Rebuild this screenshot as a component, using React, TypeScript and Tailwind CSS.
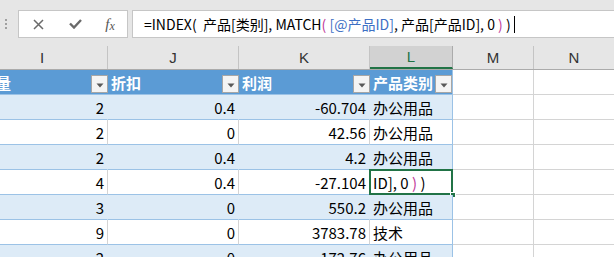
const FONT = { fontFamily: '"Noto Sans CJK SC", "Liberation Sans", sans-serif' };

type Row = { qty: string; disc: string; profit: string; cat: string; active?: boolean };

const rows: Row[] = [
  { qty: "2", disc: "0.4", profit: "-60.704", cat: "办公用品" },
  { qty: "2", disc: "0", profit: "42.56", cat: "办公用品" },
  { qty: "2", disc: "0.4", profit: "4.2", cat: "办公用品" },
  { qty: "4", disc: "0.4", profit: "-27.104", cat: "", active: true },
  { qty: "3", disc: "0", profit: "550.2", cat: "办公用品" },
  { qty: "9", disc: "0", profit: "3783.78", cat: "技术" },
  { qty: "2", disc: "0", profit: "172.76", cat: "办公用品" },
];

const GRID = "grid grid-cols-[131px_131px_131px_83px_81px_81px] -ml-[23px]";

function FilterButton() {
  return (
    <div className="absolute right-0 top-[5px] w-[17px] h-[18px] bg-[#f4f4f4] border border-[#a6a6a6] flex items-center justify-center">
      <svg width="8" height="5" viewBox="0 0 8 5" className="mt-[3px]">
        <path d="M0.5 0.5 L7.5 0.5 L4 4.5 Z" fill="#595959" />
      </svg>
    </div>
  );
}

function FormulaText() {
  return (
    <span className="whitespace-pre">
      {"=INDEX(  产品[类别], MATCH"}
      <span className="text-[#c0399a]">(</span>
      {" "}
      <span className="text-[#3d6fc4]">[@产品ID]</span>
      {", 产品[产品ID], 0 "}
      <span className="text-[#c0399a]">)</span>
      {" )"}
    </span>
  );
}

function App() {
  return (
    <div className="w-[614px] h-[257px] overflow-hidden bg-white text-black" style={FONT}>
      {/* formula bar */}
      <div className="h-[46px] bg-[#e6e6e6] flex items-start pt-[10px]">
        <div className="w-[18px] h-[27px] flex flex-col items-center justify-center gap-[2px] -ml-[3px]">
          <div className="w-[2px] h-[2px] bg-[#a0a0a0]" />
          <div className="w-[2px] h-[2px] bg-[#a0a0a0]" />
          <div className="w-[2px] h-[2px] bg-[#a0a0a0]" />
        </div>
        <div className="ml-[3px] w-[110px] h-[28px] bg-white border border-[#c6c6c6] flex items-center">
          <div className="w-[37px] flex justify-center ml-[1px]">
            <svg width="11" height="11" viewBox="0 0 11 11">
              <path d="M1 1 L10 10 M10 1 L1 10" stroke="#6a6a6a" strokeWidth="1.5" />
            </svg>
          </div>
          <div className="w-[36px] flex justify-center">
            <svg width="13" height="10" viewBox="0 0 13 10">
              <path d="M1 4.5 L5 8.5 L12 1" stroke="#6a6a6a" strokeWidth="2.4" fill="none" />
            </svg>
          </div>
          <div
            className="w-[34px] flex justify-center text-[15px] italic text-[#555] leading-none"
            style={{ fontFamily: '"Liberation Serif", serif' }}
          >
            f<span className="text-[12px] mt-[3px]">x</span>
          </div>
        </div>
        <div className="ml-[4px] flex-1 h-[28px] bg-white border border-[#c6c6c6] border-r-0 flex items-center pl-[11px] text-[14px] leading-none whitespace-nowrap">
          <FormulaText />
          <div className="w-px h-[17px] bg-black ml-[3px]" />
        </div>
      </div>

      {/* column headers */}
      <div className="h-[24px] bg-[#e6e6e6] border-b border-[#ababab] overflow-hidden">
        <div className={GRID}>
          {["I", "J", "K", "L", "M", "N"].map((c) => (
            <div
              key={c}
              className={
                c === "L"
                  ? "h-[23px] flex items-center justify-center bg-[#d2d2d2] border-r border-[#ababab] border-b-2 border-b-[#217346] text-[#217346] text-[15px] leading-none"
                  : "h-[23px] flex items-center justify-center border-r border-[#c4c4c4] text-[#333] text-[15px] leading-none"
              }
              style={{ fontFamily: '"Liberation Sans", sans-serif' }}
            >
              {c}
            </div>
          ))}
        </div>
      </div>

      {/* table */}
      <div className="overflow-hidden">
        {/* table header */}
        <div className={GRID}>
          <div className="relative h-[25px] bg-[#5b9bd5] border-b border-[#9bc2e6] text-white font-bold text-[15px] leading-none flex items-center pl-[4px]">
            数量
            <FilterButton />
          </div>
          <div className="relative h-[25px] bg-[#5b9bd5] border-b border-[#9bc2e6] text-white font-bold text-[15px] leading-none flex items-center pl-[3px]">
            折扣
            <FilterButton />
          </div>
          <div className="relative h-[25px] bg-[#5b9bd5] border-b border-[#9bc2e6] text-white font-bold text-[15px] leading-none flex items-center pl-[3px]">
            利润
            <FilterButton />
          </div>
          <div className="relative h-[25px] bg-[#5b9bd5] border-b border-[#9bc2e6] border-r border-r-[#9bc2e6] text-white font-bold text-[15px] leading-none flex items-center pl-[3px]">
            产品类别
            <FilterButton />
          </div>
          <div className="h-[25px] border-r border-b border-[#d4d4d4]" />
          <div className="h-[25px] border-r border-b border-[#d4d4d4]" />
        </div>

        {rows.map((r, i) => {
          const band = i % 2 === 0;
          const cell = band
            ? "h-[25px] bg-[#ddebf7] border-b border-[#9bc2e6] border-r border-r-[#ddebf7]"
            : "h-[25px] bg-white border-b border-[#9bc2e6] border-r border-r-[#d4d4d4]";
          const num = `${cell} flex items-center justify-end pr-[3px] text-[15px] leading-none`;
          return (
            <div key={i} className={GRID}>
              <div className={num}>{r.qty}</div>
              <div className={num}>{r.disc}</div>
              <div className={num}>{r.profit}</div>
              <div
                className={`relative h-[25px] ${band ? "bg-[#ddebf7]" : "bg-white"} border-b border-[#9bc2e6] border-r border-r-[#9bc2e6] flex items-center pl-[3px] text-[15px] leading-none whitespace-pre`}
              >
                {r.active ? (
                  <>
                    {"ID], 0 "}
                    <span className="text-[#c0399a]">)</span>
                    {" )"}
                    <div className="absolute -left-[1px] -top-[1px] -right-[1px] bottom-[-1px] border-2 border-[#217346]" />
                    <div className="absolute -right-[4px] -bottom-[4px] w-[6px] h-[6px] bg-[#217346] border border-white" />
                  </>
                ) : (
                  r.cat
                )}
              </div>
              <div className="h-[25px] border-r border-b border-[#d4d4d4]" />
              <div className="h-[25px] border-r border-b border-[#d4d4d4]" />
            </div>
          );
        })}
      </div>
    </div>
  );
}

export default App;
